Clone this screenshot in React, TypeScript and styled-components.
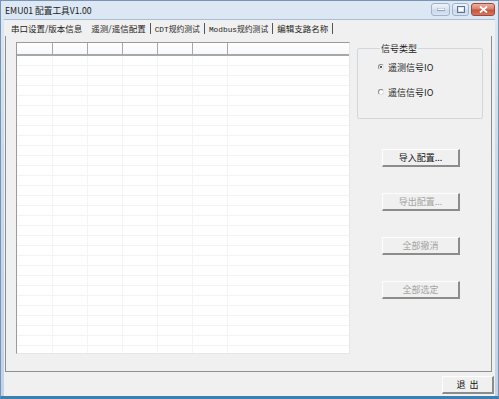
import React from 'react';
import styled, {createGlobalStyle} from 'styled-components';

const Global = createGlobalStyle`
  html, body {
    margin: 0;
    padding: 0;
    width: 499px;
    height: 399px;
    overflow: hidden;
    background: #f0f0f0;
  }
  body {
    font-family: 'Noto Sans CJK SC', 'DejaVu Sans', sans-serif;
    font-size: 9px;
    color: #1e1e1e;
  }
`;

const Window = styled.div`
  width: 499px;
  height: 399px;
  box-sizing: border-box;
  display: flex;
  flex-direction: column;
  background: linear-gradient(180deg, #dde8f4 0%, #cbdaec 40%, #c3d4e9 100%);
  border: 1px solid #7894b4;
  border-bottom: 3px solid #3d7fae;
`;

const TitleBar = styled.div`
  height: 18px;
  flex-shrink: 0;
  display: flex;
  align-items: center;
  justify-content: space-between;
  padding-left: 4px;
`;

const Title = styled.span`
  font-size: 8.7px;
  color: #1a1a1a;
`;

const Caption = styled.div`
  display: flex;
  align-self: flex-start;
  margin-top: 2px;
  margin-right: 3px;
  gap: 2px;
`;

const CapButton = styled.div<{$w: number; $close?: boolean}>`
  width: ${(p) => p.$w}px;
  height: 13px;
  box-sizing: border-box;
  border: 1px solid ${(p) => (p.$close ? '#9a4a3c' : '#9fb3cb')};
  border-radius: 3px;
  background: ${(p) =>
    p.$close
      ? 'linear-gradient(180deg, #eab2a4 0%, #d9806c 45%, #c9523a 55%, #d7765e 100%)'
      : 'linear-gradient(180deg, #eef3fa 0%, #dce6f2 45%, #cbd9ea 55%, #d8e3f0 100%)'};
  display: flex;
  align-items: center;
  justify-content: center;
`;

const Client = styled.div`
  flex: 1;
  margin: 0 3px 0 3px;
  background: #f0f0f0;
  display: flex;
  flex-direction: column;
  border-top: 1px solid #a9bdd4;
`;

const TabStrip = styled.div`
  height: 16px;
  display: flex;
  align-items: center;
  padding-left: 3px;
  flex-shrink: 0;
`;

const Tab = styled.div<{$mono?: boolean; $gap?: number}>`
  font-family: ${(p) =>
    p.$mono
      ? "'Liberation Mono', 'Noto Sans CJK SC', monospace"
      : "'Noto Sans CJK SC', sans-serif"};
  font-size: ${(p) => (p.$mono ? '7.8px' : '8.5px')};
  color: #1e1e1e;
  padding: 0 4px;
  margin-left: ${(p) => p.$gap || 0}px;
  white-space: nowrap;
`;

const Sep = styled.div`
  width: 1px;
  height: 11px;
  background: #555;
`;

const Panel = styled.div`
  height: 336px;
  margin: 0 3px 0 1px;
  box-sizing: border-box;
  border-left: 1px solid #8e8e8e;
  border-right: 1px solid #8e8e8e;
  border-bottom: 1px solid #8e8e8e;
  display: flex;
  padding: 6px 0 0 10px;
  gap: 7px;
`;

const List = styled.div`
  width: 334px;
  height: 312px;
  box-sizing: border-box;
  background: #fff;
  border-left: 1px solid #9a9a9a;
  border-top: 1px solid #9a9a9a;
  border-right: 1px solid #e6e6e6;
  border-bottom: 1px solid #e6e6e6;
  display: flex;
  flex-direction: column;
  overflow: hidden;
`;

const HeaderRow = styled.div`
  display: flex;
  height: 11px;
  border-bottom: 2px solid #a8a8a8;
  flex-shrink: 0;
`;

const HeadCell = styled.div<{$w: number}>`
  width: ${(p) => p.$w}px;
  flex-shrink: 0;
  box-sizing: border-box;
  border-right: 1px solid #a8a8a8;
  background: linear-gradient(180deg, #ffffff 0%, #f7f8fa 100%);
`;

const Row = styled.div`
  display: flex;
  height: 10px;
  flex-shrink: 0;
  border-bottom: 1px solid #f3f3f3;
  box-sizing: border-box;
`;

const Cell = styled.div<{$w: number}>`
  width: ${(p) => p.$w}px;
  flex-shrink: 0;
  box-sizing: border-box;
  border-right: 1px solid #f4f4f4;
`;

const Side = styled.div`
  display: flex;
  flex-direction: column;
  align-items: flex-start;
  padding-top: 2px;
`;

const Group = styled.fieldset`
  margin: 0;
  width: 126px;
  height: 75px;
  box-sizing: border-box;
  border: 1px solid #d0d7dd;
  border-radius: 2px;
  padding: 8px 0 0 20px;
  display: flex;
  flex-direction: column;
  gap: 13px;
`;

const Legend = styled.legend`
  padding: 0 1px;
  margin-left: 2px;
  font-size: 9px;
  line-height: 9px;
`;

const RadioRow = styled.label`
  display: flex;
  align-items: center;
  gap: 4px;
  font-size: 9px;
  height: 12px;
`;

const RadioDot = styled.span<{$on?: boolean}>`
  width: 6px;
  height: 6px;
  border-radius: 50%;
  box-sizing: border-box;
  border: 1px solid #8a8a8a;
  border-right-color: #e0e0e0;
  border-bottom-color: #e0e0e0;
  background: #fff;
  position: relative;
  &::after {
    content: '';
    display: ${(p) => (p.$on ? 'block' : 'none')};
    position: absolute;
    left: 1px;
    top: 1px;
    width: 2px;
    height: 2px;
    background: #222;
    border-radius: 50%;
  }
`;

const Buttons = styled.div`
  display: flex;
  flex-direction: column;
  gap: 26px;
  margin-top: 30px;
  margin-left: 25px;
`;

const Btn = styled.div<{$disabled?: boolean; $w?: number}>`
  width: ${(p) => p.$w || 78}px;
  height: 18px;
  box-sizing: border-box;
  border-top: 1px solid #fdfdfd;
  border-left: 1px solid #fdfdfd;
  border-right: 2px solid #8c8c8c;
  border-bottom: 2px solid #8c8c8c;
  background: #f0f0f0;
  display: flex;
  align-items: center;
  justify-content: center;
  font-size: 9px;
  color: ${(p) => (p.$disabled ? '#a3a3a3' : '#111')};
  white-space: pre;
`;

const Footer = styled.div`
  flex: 1;
  display: flex;
  justify-content: flex-end;
  align-items: flex-start;
  padding: 4px 1px 0 0;
`;

const widths = [36, 35, 35, 35, 35, 35, 122];

export default function App() {
  const rows = Array.from({length: 30}, (_, i) => i);
  return (
    <>
      <Global />
      <Window>
        <TitleBar>
          <Title>EMU01 配置工具V1.00</Title>
          <Caption>
            <CapButton $w={19}>
              <svg width='8' height='3' viewBox='0 0 8 3'>
                <rect x='0' y='0' width='8' height='2.5' fill='#fff' stroke='#56729a' strokeWidth='0.6' />
              </svg>
            </CapButton>
            <CapButton $w={17}>
              <svg width='8' height='7' viewBox='0 0 8 7'>
                <rect x='0.5' y='0.5' width='7' height='6' fill='none' stroke='#56729a' strokeWidth='1' />
                <rect x='2' y='2' width='4' height='3' fill='#fff' />
              </svg>
            </CapButton>
            <CapButton $w={24} $close>
              <svg width='9' height='7' viewBox='0 0 9 7'>
                <path d='M1 0.5 L8 6.5 M8 0.5 L1 6.5' stroke='#fff' strokeWidth='1.8' />
              </svg>
            </CapButton>
          </Caption>
        </TitleBar>
        <Client>
          <TabStrip>
            <Tab>串口设置/版本信息</Tab>
            <Tab $gap={1}>遥测/遥信配置</Tab>
            <Sep />
            <Tab $mono>CDT规约测试</Tab>
            <Sep />
            <Tab $mono>Modbus规约测试</Tab>
            <Sep />
            <Tab>编辑支路名称</Tab>
            <Sep />
          </TabStrip>
          <Panel>
            <List>
              <HeaderRow>
                {widths.map((w, i) => (
                  <HeadCell key={i} $w={w} />
                ))}
              </HeaderRow>
              {rows.map((r) => (
                <Row key={r}>
                  {widths.map((w, i) => (
                    <Cell key={i} $w={w} />
                  ))}
                </Row>
              ))}
            </List>
            <Side>
              <Group>
                <Legend>信号类型</Legend>
                <RadioRow>
                  <RadioDot $on />
                  遥测信号IO
                </RadioRow>
                <RadioRow>
                  <RadioDot />
                  遥信信号IO
                </RadioRow>
              </Group>
              <Buttons>
                <Btn>导入配置...</Btn>
                <Btn $disabled>导出配置...</Btn>
                <Btn $disabled>全部撤消</Btn>
                <Btn $disabled>全部选定</Btn>
              </Buttons>
            </Side>
          </Panel>
          <Footer>
            <Btn $w={52}>{'退  出'}</Btn>
          </Footer>
        </Client>
      </Window>
    </>
  );
}
